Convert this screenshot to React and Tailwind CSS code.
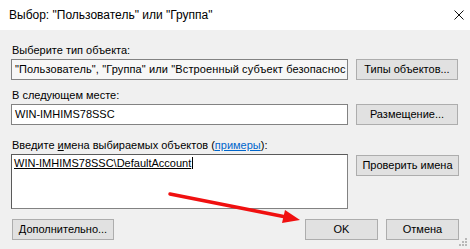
import React from "react";

const font = { fontFamily: '"Liberation Sans", Arial, sans-serif' };

function Btn({ children, className = "" }) {
  return (
    <div
      className={
        "h-[21px] flex items-center justify-center bg-[#e1e1e1] border border-[#adadad] text-[11px] text-black " +
        className
      }
    >
      {children}
    </div>
  );
}

export default function App() {
  return (
    <div
      className="relative w-[470px] h-[249px] overflow-hidden bg-[#f0f0f0] text-black"
      style={font}
    >
      {/* title bar */}
      <div className="h-[30px] bg-white flex items-center justify-between pl-[9px] pr-[6px]">
        <span className="text-[12px] leading-[14px]">
          Выбор: "Пользователь" или "Группа"
        </span>
        <svg width="10" height="10" viewBox="0 0 10 10">
          <path d="M0.5 0.5 L9.5 9.5 M9.5 0.5 L0.5 9.5" stroke="#111" strokeWidth="1" />
        </svg>
      </div>

      {/* body */}
      <div className="pl-[11px] flex flex-col">
        <div className="mt-[14px] text-[11px] leading-[13px] pl-[1px]">Выберите тип объекта:</div>
        <div className="mt-[2px] flex gap-[8px]">
          <div className="w-[337px] h-[21px] bg-[#f7f7f7] border border-[#828282] flex items-center pl-[3px] overflow-hidden whitespace-nowrap text-[11px] tracking-[0.12px]">
            "Пользователь", "Группа" или "Встроенный субъект безопаснос
          </div>
          <Btn className="w-[102px]">Типы объектов...</Btn>
        </div>

        <div className="mt-[9px] text-[11px] leading-[13px] pl-[1px]">В следующем месте:</div>
        <div className="mt-[2px] flex gap-[8px]">
          <div className="w-[337px] h-[21px] bg-white border border-[#828282] flex items-center pl-[3px] overflow-hidden whitespace-nowrap text-[11px]">
            WIN-IMHIMS78SSC
          </div>
          <Btn className="w-[102px]">Размещение...</Btn>
        </div>

        <div className="mt-[14px] text-[11px] leading-[13px] pl-[1px]">
          Введите <span className="underline">и</span>мена выбираемых объектов (
          <span className="text-[#0066cc] underline">примеры</span>):
        </div>
        <div className="mt-[2px] flex gap-[8px] items-start">
          <div className="w-[337px] h-[55px] bg-white border border-[#828282] border-t-[#5a5a5a] border-l-[#5a5a5a] pl-[2px] pt-[2px] text-[11px] leading-[13px]">
            <span className="underline border-r border-black pr-[1px]">
              WIN-IMHIMS78SSC\DefaultAccount
            </span>
          </div>
          <Btn className="w-[103px] mt-[1px]">Проверить имена</Btn>
        </div>

        <div className="mt-[10px] flex items-center">
          <Btn className="w-[102px] ml-[1px]">Дополнительно...</Btn>
          <div className="flex-1" />
          <Btn className="w-[73px]">OK</Btn>
          <Btn className="w-[73px] ml-[8px] mr-[11px]">Отмена</Btn>
        </div>
      </div>

      {/* resize grip */}
      <svg className="absolute right-[2px] bottom-[2px]" width="9" height="9" viewBox="0 0 9 9">
        <rect x="6" y="0" width="2" height="2" fill="#b8b8b8" />
        <rect x="3" y="3" width="2" height="2" fill="#b8b8b8" />
        <rect x="6" y="3" width="2" height="2" fill="#b8b8b8" />
        <rect x="0" y="6" width="2" height="2" fill="#b8b8b8" />
        <rect x="3" y="6" width="2" height="2" fill="#b8b8b8" />
        <rect x="6" y="6" width="2" height="2" fill="#b8b8b8" />
      </svg>

      {/* red annotation arrow */}
      <svg className="absolute left-0 top-0 pointer-events-none" width="470" height="249">
        <line x1="170" y1="194" x2="286" y2="217" stroke="#f01010" strokeWidth="3.5" strokeLinecap="round" />
        <polygon points="300,220 282,223 285,210" fill="#f01010" />
      </svg>
    </div>
  );
}
